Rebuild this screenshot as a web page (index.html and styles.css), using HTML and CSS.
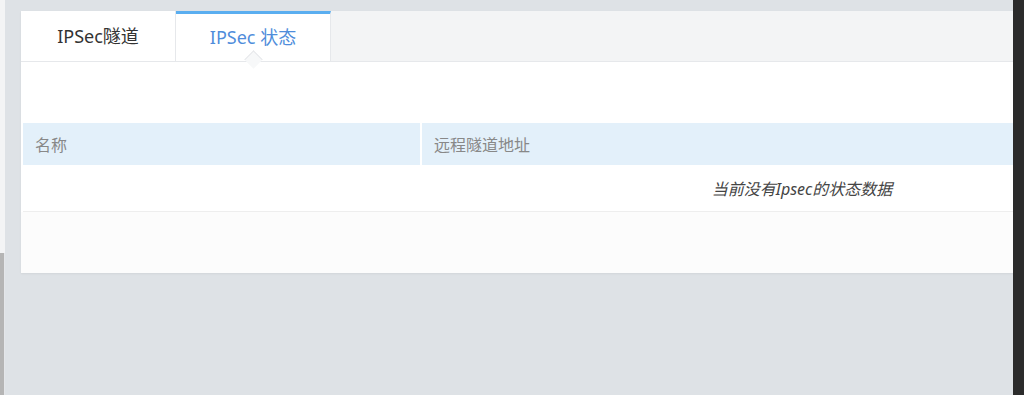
FILE: index.html
```html
<!DOCTYPE html>
<html lang="zh-CN">
<head>
    <meta charset="UTF-8">
    <title>IPSec 状态</title>
    <link rel="stylesheet" href="styles.css">
</head>
<body>
    <div class="side-edge">
        <div class="side-top"></div>
        <div class="side-bottom"></div>
    </div>

    <div class="main">
        <div class="card">
            <div class="tabs">
                <div class="tab">IPSec隧道</div>
                <div class="tab active">IPSec 状态</div>
            </div>
            <div class="card-body">
                <table class="status-table">
                    <thead>
                        <tr>
                            <th class="col-name">名称</th>
                            <th>远程隧道地址</th>
                        </tr>
                    </thead>
                    <tbody>
                        <tr>
                            <td class="empty" colspan="2">当前没有Ipsec的状态数据</td>
                        </tr>
                    </tbody>
                </table>
            </div>
        </div>
    </div>

    <div class="dark-edge"></div>
</body>
</html>
```

FILE: styles.css
```css
* {
    margin: 0;
    padding: 0;
    box-sizing: border-box;
}

body {
    font-family: "Noto Sans", "Noto Sans CJK SC", sans-serif;
    display: flex;
    height: 395px;
    overflow: hidden;
    background: #dee2e6;
}

.side-edge {
    width: 5px;
    display: flex;
    flex-direction: column;
    flex-shrink: 0;
}

.side-top {
    height: 253px;
    background: #f3f4f5;
}

.side-bottom {
    flex: 1;
    background: #b5b5b5;
    border-right: 1px solid #e4e6e9;
}

.main {
    flex: 1;
    min-width: 0;
    overflow: hidden;
    padding: 11px 0 0 16px;
    background: #dee2e6;
}

.card {
    width: 1580px;
    background: #fcfcfc;
    box-shadow: 0 1px 2px rgba(0, 0, 0, 0.06);
}

.tabs {
    display: flex;
    height: 51px;
    background: #f3f4f5;
    border-bottom: 1px solid #e6e8eb;
}

.tab {
    width: 155px;
    line-height: 50px;
    text-align: center;
    font-size: 18px;
    color: #333;
    background: #fff;
    border-right: 1px solid #e6e8eb;
    position: relative;
}

.tab.active {
    color: #4f8ddb;
    border-top: 3px solid #5aaef0;
    line-height: 47px;
}

.tab.active::after {
    content: '';
    position: absolute;
    left: 50%;
    bottom: -5px;
    width: 12px;
    height: 12px;
    margin-left: -6px;
    background: #f7f8f9;
    border-top: 1px solid #e6e8eb;
    border-left: 1px solid #e6e8eb;
    transform: rotate(45deg);
}

.card-body {
    padding: 61px 0 61px 2px;
    background: linear-gradient(#fff 0 150px, #fcfcfc 150px);
}

.status-table {
    width: 1558px;
    border-spacing: 0;
    background: #fff;
}

.status-table th {
    height: 42px;
    padding: 0 12px;
    text-align: left;
    font-size: 16px;
    font-weight: 400;
    color: #888;
    background: #e3f0fa;
}

.status-table th.col-name {
    width: 399px;
    border-right: 2px solid #fff;
}

.status-table td.empty {
    height: 47px;
    text-align: center;
    font-size: 16px;
    font-style: italic;
    color: #444;
    border-bottom: 1px solid #eeeeee;
}

.dark-edge {
    width: 11px;
    flex-shrink: 0;
    background: #2b2b2b;
}
```
